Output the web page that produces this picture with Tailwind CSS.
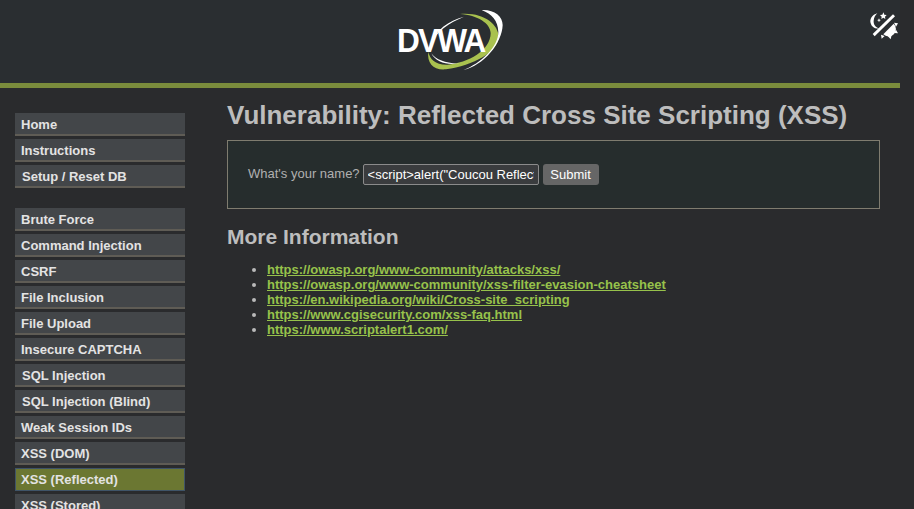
<!DOCTYPE html>
<html lang="en">
<head>
    <meta charset="UTF-8">
    <title>Vulnerability: Reflected Cross Site Scripting (XSS)</title>
    <script src="https://cdn.jsdelivr.net/npm/@tailwindcss/browser@4"></script>
</head>
<body class="bg-[#2a2b2d] h-[509px] w-[914px] overflow-hidden font-['Liberation_Sans',Arial,sans-serif] text-[#b9b9b9]">
<div class="w-[900px]">
    <!-- header -->
    <header class="relative h-[88px] bg-[#2a2e31] border-b-[5px] border-[#7a8c3c]">
        <div class="flex justify-center">
            <div class="relative w-[160px] h-[83px]">
                <svg class="absolute inset-0" width="160" height="83" viewBox="0 0 480 249">
                    <path d="M270 42 C340 36 385 72 386 110 C386 155 310 196 228 208 C192 212 170 190 175 155 C180 178 196 195 232 194 C295 190 362 150 362 100 C362 70 322 45 270 42 Z" fill="#a9c24f"/>
                    <path d="M335 30 C372 28 398 48 398 75 C396 130 342 196 280 210 C332 190 386 140 385 95 C384 62 366 42 335 30 Z" fill="#ffffff"/>
                    <path d="M282 50 C235 62 198 90 183 130 C198 96 238 68 282 50 Z" fill="#ffffff"/>
                    <path d="M184 160 C198 180 232 192 268 190 C232 197 196 186 184 160 Z" fill="#ffffff"/>
                </svg>
                <span class="absolute left-[27px] top-[23px] text-[34px] leading-[34px] font-bold text-white tracking-[-2px] origin-left scale-x-[0.93]">DVWA</span>
            </div>
        </div>
        <!-- theme toggle -->
        <svg class="absolute left-[850px] top-0" width="50" height="40" viewBox="0 0 150 120" fill="#ffffff">
            <path d="M82 40 C66 44 58 58 62 70 C65 82 76 88 88 85 C76 82 70 72 71 62 C72 52 76 45 82 40 Z"/>
            <path d="M100 37 L103 44 L110 45 L105 50 L106 57 L100 53 L94 57 L95 50 L90 45 L97 44 Z"/>
            <path d="M87 55 L89 59 L93 60 L89 62 L87 67 L85 62 L81 60 L85 59 Z"/>
            <path d="M68 102 L129 43 L135 49 L74 109 Z"/>
            <path d="M131 71 A22 22 0 0 1 100 103 Z"/>
            <path d="M132 68 L144 70 L138 80 Z M138 89 L144 100 L132 99 Z M125 105 L122 118 L113 108 Z M104 108 L95 116 L93 104 Z"/>
        </svg>
    </header>

    <div class="flex">
        <!-- sidebar -->
        <nav class="w-[227px] shrink-0 pl-[15px] pt-[25px]">
            <ul class="w-[170px] flex flex-col gap-[3px]">
                <li class="h-[23px] bg-[#434649] border-b-2 border-[#5f5c55] pl-[6px] text-[13px] leading-[23px] font-bold text-[#e3e3e3]">Home</li>
                <li class="h-[23px] bg-[#434649] border-b-2 border-[#5f5c55] pl-[6px] text-[13px] leading-[23px] font-bold text-[#e3e3e3]">Instructions</li>
                <li class="h-[23px] bg-[#434649] border-b-2 border-[#5f5c55] pl-[7px] text-[13px] leading-[23px] font-bold text-[#e3e3e3]">Setup / Reset DB</li>
            </ul>
            <ul class="w-[170px] flex flex-col gap-[3px] mt-[20px]">
                <li class="h-[23px] bg-[#434649] border-b-2 border-[#5f5c55] pl-[6px] text-[13px] leading-[23px] font-bold text-[#e3e3e3]">Brute Force</li>
                <li class="h-[23px] bg-[#434649] border-b-2 border-[#5f5c55] pl-[6px] text-[13px] leading-[23px] font-bold text-[#e3e3e3]">Command Injection</li>
                <li class="h-[23px] bg-[#434649] border-b-2 border-[#5f5c55] pl-[6px] text-[13px] leading-[23px] font-bold text-[#e3e3e3]">CSRF</li>
                <li class="h-[23px] bg-[#434649] border-b-2 border-[#5f5c55] pl-[6px] text-[13px] leading-[23px] font-bold text-[#e3e3e3]">File Inclusion</li>
                <li class="h-[23px] bg-[#434649] border-b-2 border-[#5f5c55] pl-[6px] text-[13px] leading-[23px] font-bold text-[#e3e3e3]">File Upload</li>
                <li class="h-[23px] bg-[#434649] border-b-2 border-[#5f5c55] pl-[6px] text-[13px] leading-[23px] font-bold text-[#e3e3e3]">Insecure CAPTCHA</li>
                <li class="h-[23px] bg-[#434649] border-b-2 border-[#5f5c55] pl-[7px] text-[13px] leading-[23px] font-bold text-[#e3e3e3]">SQL Injection</li>
                <li class="h-[23px] bg-[#434649] border-b-2 border-[#5f5c55] pl-[7px] text-[13px] leading-[23px] font-bold text-[#e3e3e3]">SQL Injection (Blind)</li>
                <li class="h-[23px] bg-[#434649] border-b-2 border-[#5f5c55] pl-[6px] text-[13px] leading-[23px] font-bold text-[#e3e3e3]">Weak Session IDs</li>
                <li class="h-[23px] bg-[#434649] border-b-2 border-[#5f5c55] pl-[6px] text-[13px] leading-[23px] font-bold text-[#e3e3e3]">XSS (DOM)</li>
                <li class="h-[23px] bg-[#6b7732] border border-[#3f5468] pl-[5px] text-[13px] leading-[21px] font-bold text-[#e3e3e3]">XSS (Reflected)</li>
                <li class="h-[23px] bg-[#434649] border-b-2 border-[#5f5c55] pl-[6px] text-[13px] leading-[23px] font-bold text-[#e3e3e3]">XSS (Stored)</li>
            </ul>
        </nav>

        <!-- main -->
        <main class="flex-1 pr-[20px] pt-[11px]">
            <h1 class="text-[26px] leading-[32px] font-bold text-[#bdbdbd] whitespace-nowrap">Vulnerability: Reflected Cross Site Scripting (XSS)</h1>
            <div class="mt-[9px] h-[69px] bg-[#262d2d] border border-[#7f7c6f] flex items-center pl-[20px] text-[13px]">
                <span class="text-[#b0b0b0] -translate-y-[1px]">What's your name?</span>
                <input type="text" value='&lt;script&gt;alert("Coucou Reflected")&lt;/script&gt;' class="ml-[3px] w-[176px] h-[21px] px-[4px] bg-[#3a3c3e] border border-[#8b8b8b] rounded-[2px] text-[13px] text-white">
                <button class="ml-[4px] w-[56px] h-[21px] bg-[#666666] rounded-[3px] text-[13px] font-normal text-white">Submit</button>
            </div>
            <h2 class="mt-[16px] text-[21px] leading-[24px] font-bold text-[#bdbdbd]">More Information</h2>
            <ul class="mt-[13px] pl-[40px] list-disc text-[13px] leading-[15px] font-bold marker:text-[#b9b9b9]">
                <li><a href="#" class="text-[#97c24b] underline">https://owasp.org/www-community/attacks/xss/</a></li>
                <li><a href="#" class="text-[#97c24b] underline">https://owasp.org/www-community/xss-filter-evasion-cheatsheet</a></li>
                <li><a href="#" class="text-[#97c24b] underline">https://en.wikipedia.org/wiki/Cross-site_scripting</a></li>
                <li><a href="#" class="text-[#97c24b] underline">https://www.cgisecurity.com/xss-faq.html</a></li>
                <li><a href="#" class="text-[#97c24b] underline">https://www.scriptalert1.com/</a></li>
            </ul>
        </main>
    </div>
</div>
</body>
</html>
